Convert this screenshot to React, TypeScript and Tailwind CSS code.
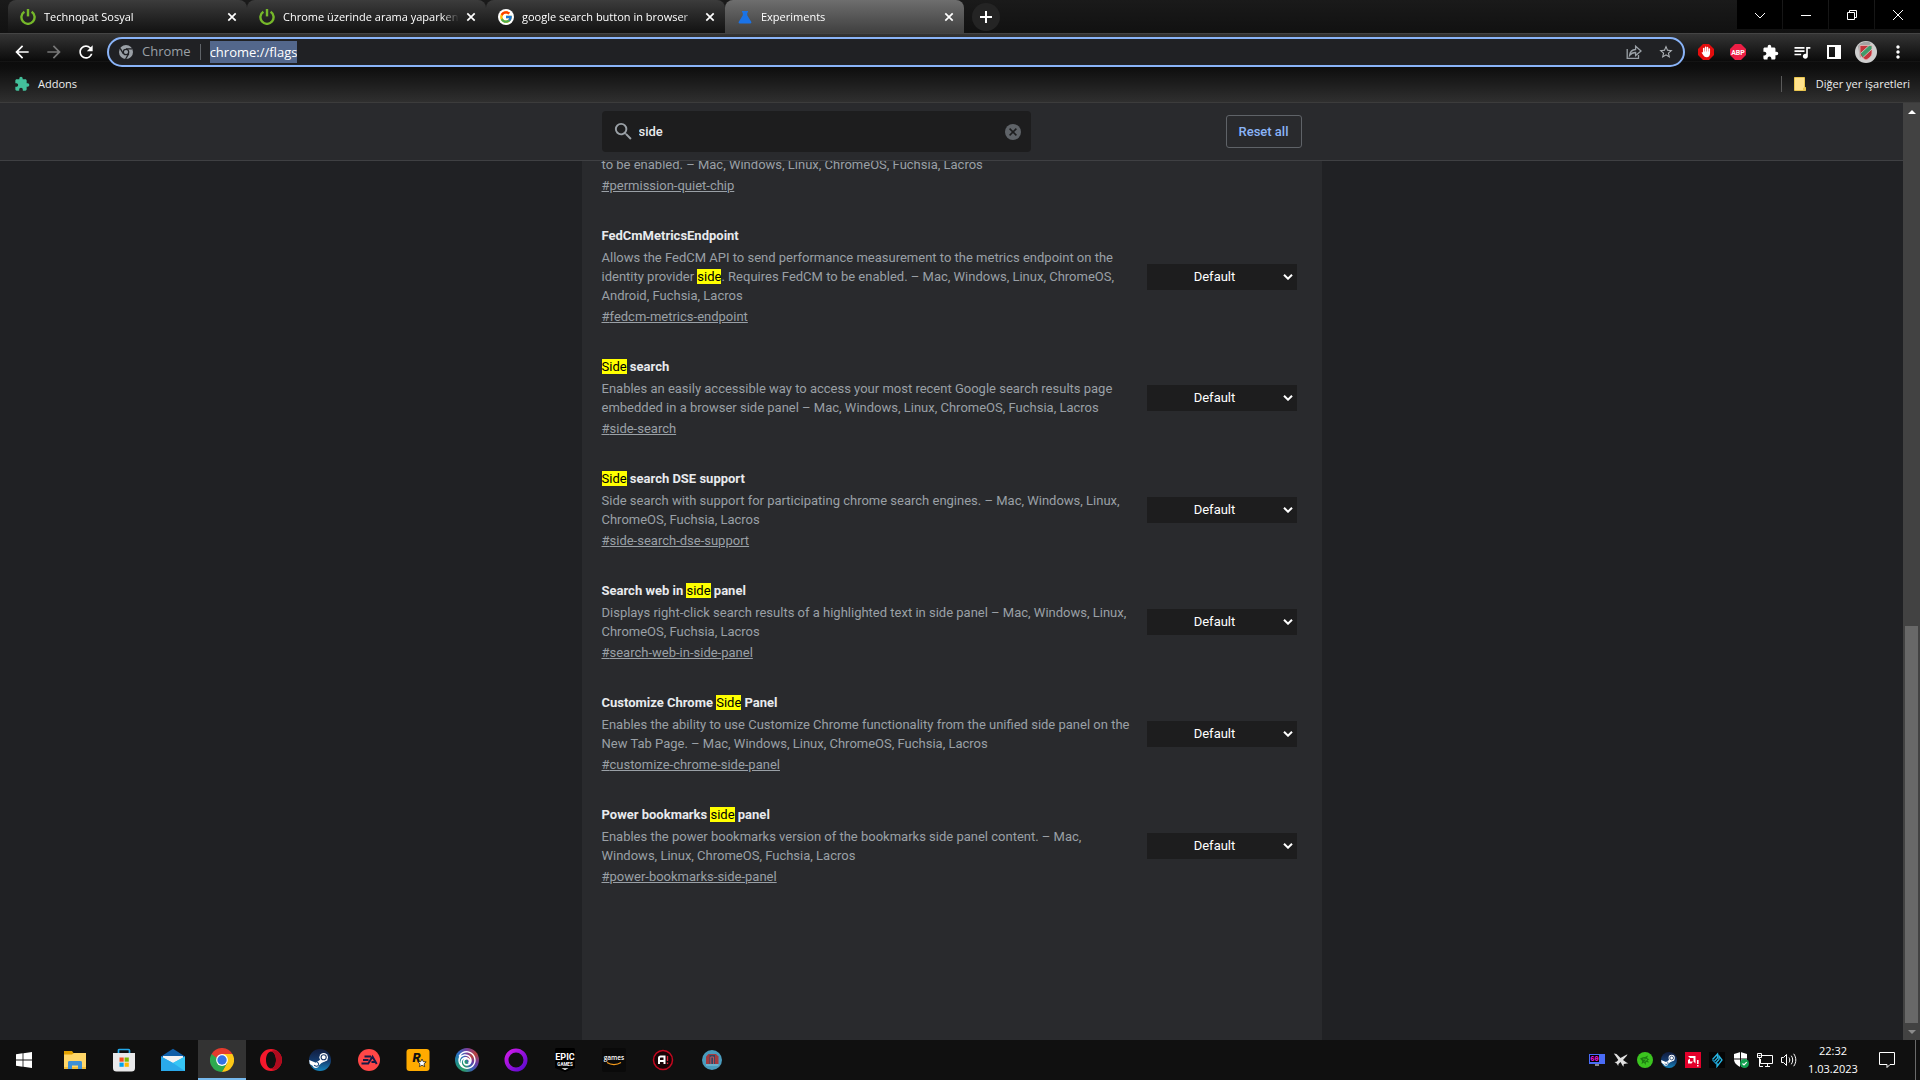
import type { ReactNode } from 'react'
import { MdArrowBack, MdArrowForward, MdRefresh, MdExtension, MdQueueMusic, MdMoreVert, MdSearch, MdStarBorder } from 'react-icons/md'
import { FcGoogle } from 'react-icons/fc'
import { SiUbisoft } from 'react-icons/si'

const UI_FONT = "font-['Open_Sans','Noto_Sans',sans-serif]"

/* ---------- browser icons ---------- */

const PowerIcon = () => (
  <svg viewBox="0 0 16 16" className="size-4" fill="none" stroke="#76b82a" strokeWidth="2.4">
    <path d="M4.4 2.7A6.6 6.6 0 1 0 11.6 2.7"/>
    <path d="M8 0v7.4"/>
  </svg>
)

const GoogleIcon = () => (
  <span className="flex size-4 items-center justify-center rounded-full bg-white"><FcGoogle size={14}/></span>
)

const FlaskIcon = () => (
  <svg viewBox="0 0 16 16" className="size-4" fill="#1a73e8">
    <path d="M5 2h6v1.5h-.8v2.7l4 6.6c.5.8 0 1.700-.9 1.700H2.700c-.9 0-1.400-.9-.9-1.700l4-6.600V3.500H5z"/>
  </svg>
)

const CloseIcon = () => (
  <svg viewBox="0 0 16 16" className="size-4" stroke="#fff" strokeWidth="1.7"><path d="M4.3 4.3l7.4 7.4M11.700 4.300l-7.400 7.400"/></svg>
)

const ChromeMono = () => (
  <svg viewBox="0 0 16 16" className="size-4" fill="none">
    <circle cx="8" cy="8" r="7" fill="#9aa0a6"/>
    <circle cx="8" cy="8" r="2.7" fill="#9aa0a6" stroke="#202124" strokeWidth="1.3"/>
    <path d="M8 4.800h6.200M5.300 9.600L2.200 4.300M10.800 9.600L7.600 15" stroke="#202124" strokeWidth="1.3"/>
  </svg>
)

const ShareIcon = () => (
  <svg viewBox="0 0 16 16" className="size-4" fill="none" stroke="#9aa0a6" strokeWidth="1.3">
    <path d="M1.200 5v9.400h11.300V11"/>
    <path d="M3.600 11.400C4 7.600 6.200 5.700 9.600 5.500V2.300L15 7l-5.400 4.600V8.500c-2.700 0-4.600.9-6 2.900z"/>
  </svg>
)

const OCTAGON = 'M5 0h6l5 5v6l-5 5H5l-5-5V5z'

const HandIcon = () => (
  <svg viewBox="0 0 16 16" className="size-4">
    <path d={OCTAGON} fill="#e40d0d"/>
    <path d="M5.700 9V4.500M7.600 8V3.200M9.500 8V3.600M11.300 9V5" stroke="#fff" strokeWidth="1.5" strokeLinecap="round"/>
    <path d="M5 7.500h7v2c0 2.200-1.200 3.700-3.300 3.700-1.700 0-2.600-.7-3.400-2L3.600 8.700c.4-.7 1.100-.5 1.500 0z" fill="#fff"/>
  </svg>
)

const AbpIcon = () => (
  <svg viewBox="0 0 16 16" className="size-4">
    <path d={OCTAGON} fill="#ed1e45"/>
    <text x="8" y="10.600" textAnchor="middle" fontSize="7" fontWeight="700" fontFamily="Roboto, sans-serif" fill="#fff">ABP</text>
  </svg>
)

const SidePanelIcon = () => (
  <svg viewBox="0 0 16 16" className="size-4"><path fillRule="evenodd" fill="#fff" d="M1 1h14v14H1zM3 3v10h6V3z"/></svg>
)

const ProfileIcon = () => (
  <svg viewBox="0 0 22 22" className="size-[22px]">
    <circle cx="11" cy="11" r="11" fill="#cfcfcf"/>
    <path d="M3 5a10 10 0 0 1 13-3L5 17z" fill="#a3a3a3"/>
    <path d="M5 4.500h12V12c0 3-3 5.500-6 7-3-1.500-6-4-6-7z" fill="#c3343c"/>
    <path d="M5.500 12L14 4.500h3V8L8 16.500z" fill="#3f9b6b"/>
    <path d="M5.500 12.500l8.500-8M8 16.500l9-8.500" stroke="#f2d9d9" strokeWidth=".7"/>
    <path d="M5 4.500h12V12c0 3-3 5.500-6 7-3-1.500-6-4-6-7z" fill="none" stroke="#e6bcbc" strokeWidth=".8"/>
  </svg>
)

const FolderIcon = () => (
  <svg viewBox="0 0 16 16" className="size-4">
    <path d="M2.500 1.500h10V11l1 .5v3h-11z" fill="#ffe28c" stroke="#eac64f"/>
    <path d="M11 14.500V12l1.500-1 1 .7v2.800z" fill="#eac64f"/>
  </svg>
)

/* ---------- taskbar icons ---------- */

const WindowsIcon = () => (
  <svg viewBox="0 0 16 16" className="size-4" fill="#fff">
    <path d="M0 2.200l6.600-.9v6.300H0zM7.400 1.200L16 0v7.600H7.400zM0 8.400h6.600v6.300L0 13.800zM7.400 8.400H16V16l-8.600-1.200z"/>
  </svg>
)

const ExplorerIcon = () => (
  <svg viewBox="0 0 24 24" className="size-6">
    <path d="M1 3h8l1.500 2H22v3H1z" fill="#e2a100"/>
    <path d="M1 6.500h8L11 5h12v16H1z" fill="#ffd667"/>
    <path d="M5 21v-6.500c0-1 .6-1.500 1.500-1.500h11c.9 0 1.500.5 1.500 1.500V21h-4v-3.500H9V21z" fill="#3d8fd6"/>
    <path d="M1 19h4v2H1zM19 19h4v2h-4zM9 19h6v2H9z" fill="#f3bd35"/>
  </svg>
)

const StoreIcon = () => (
  <svg viewBox="0 0 24 24" className="size-6">
    <path d="M6.500 6V2.500c0-.7.4-1 1-1h9c.6 0 1 .3 1 1V6" fill="none" stroke="#23a9ea" strokeWidth="1.700"/>
    <path d="M1 5h22v15a3.500 3.500 0 0 1-3.500 3.500h-15A3.500 3.500 0 0 1 1 20z" fill="#e9e9ea"/>
    <path d="M7.500 9.500h4.200v4.200H7.500z" fill="#f25022"/>
    <path d="M12.600 9.500h4.200v4.200h-4.200z" fill="#7fba00"/>
    <path d="M7.500 14.600h4.200v4.200H7.500z" fill="#00a4ef"/>
    <path d="M12.600 14.600h4.200v4.200h-4.200z" fill="#ffb900"/>
  </svg>
)

const MailIcon = () => (
  <svg viewBox="0 0 24 24" className="size-6">
    <path d="M0 8.500L12 .8l12 7.700V12H0z" fill="#0f5ea8"/>
    <path d="M2 8h20v6l-10 3L2 14z" fill="#f2f2f2"/>
    <path d="M0 8.500L12 15l12-6.500V23H0z" fill="#2cb4ee"/>
    <path d="M12 15l12 8H0V8.500z" fill="#2aa9ea"/>
    <path d="M12 15l12-6.500V23z" fill="#36c5f5"/>
  </svg>
)

const ChromeIcon = () => (
  <svg viewBox="0 0 24 24" className="size-6">
    <path d="M12 12L1.600 6A12 12 0 0 1 22.400 6z" fill="#e33b2e"/>
    <path d="M1.600 6A12 12 0 0 0 12 24l5.200-9L12 12z" fill="#2da94f"/>
    <path d="M12 24A12 12 0 0 0 22.400 6H12l5.200 9z" fill="#fdc817"/>
    <path d="M1.600 6L6.800 15 12 12V6z" fill="#2da94f"/>
    <path d="M1.600 6L6.800 10 12 6.600V6z" fill="#e33b2e"/>
    <circle cx="12" cy="12" r="5.900" fill="#fff"/>
    <circle cx="12" cy="12" r="4.700" fill="#3472e4"/>
  </svg>
)

const OperaIcon = () => (
  <svg viewBox="0 0 24 24" className="size-6">
    <path fillRule="evenodd" fill="#f5182c" d="M12 1a11 11 0 1 0 0 22 11 11 0 0 0 0-22zm0 2.500c2.800 0 5 3.800 5 8.500s-2.200 8.500-5 8.500S7 16.700 7 12s2.200-8.500 5-8.500z"/>
    <path fill="#b00b1e" d="M12 3.500C14 1.500 17 2 19 3.600a11 11 0 0 1 0 16.800c-2 1.600-5 2.100-7 .1 2.800 0 5-3.800 5-8.500s-2.200-8.500-5-8.500z"/>
  </svg>
)

const SteamIcon = ({ className }: { className: string }) => (
  <svg viewBox="0 0 24 24" className={className}>
    <defs><linearGradient id="steam" x1="0" y1="0" x2="0" y2="1"><stop stopColor="#111d3f"/><stop offset=".5" stopColor="#14386a"/><stop offset="1" stopColor="#1585bd"/></linearGradient></defs>
    <circle cx="12" cy="12" r="12" fill="url(#steam)"/>
    <path d="M.2 12l7.300 3 5-3.500 1.800-4.500 6.200 5-6.800 3.200-2.700 2.600a3.700 3.700 0 0 1-7.100.6L.8 16.300z" fill="#fff"/>
    <circle cx="16" cy="9" r="4.700" fill="#fff"/>
    <circle cx="16" cy="9" r="2.800" fill="none" stroke="#1a3766" strokeWidth="1.200"/>
    <path d="M5.500 17.800l1.800.7a2.200 2.200 0 1 0 1.500-4.100" fill="none" stroke="#1a4a80" strokeWidth="1.100"/>
  </svg>
)

const EaIcon = () => (
  <svg viewBox="0 0 24 24" className="size-6" fill="none" stroke="#151a46" strokeWidth="1.900">
    <circle cx="12" cy="12" r="11" fill="#ff4747" stroke="none"/>
    <path d="M7.500 8.500h6.500M6 12h5.500M4.500 15.500h6.700L15.500 8.700l4.200 7.300M14.500 14h3.500"/>
  </svg>
)

const RockstarIcon = () => (
  <svg viewBox="0 0 24 24" className="size-6">
    <rect x=".5" y="1" width="23" height="22" rx="3" fill="#ffab00"/>
    <text x="6.500" y="14" fontSize="13" fontWeight="900" fontStyle="italic" fontFamily="Roboto, sans-serif" fill="#111">R</text>
    <path d="M16 11l1.200 2.600 3 .3-2.200 1.900.7 2.900-2.700-1.500-2.600 1.500.6-2.900-2.100-1.900 2.900-.3z" fill="#fff" stroke="#111" strokeWidth=".7"/>
  </svg>
)

const UbisoftIcon = () => (
  <span className="flex size-6 items-center justify-center rounded-full bg-[conic-gradient(#7a3f9d,#b8433f_15%,#6b3aa0_30%,#3b62b5_42%,#2c9a6a_55%,#1f8f8a_70%,#2a6fc4_85%,#7a3f9d)] text-white">
    <SiUbisoft size={18}/>
  </span>
)

const RingIcon = () => (
  <svg viewBox="0 0 24 24" className="size-6" fill="none">
    <defs><linearGradient id="ring" x1="0" y1="0" x2="1" y2="1"><stop stopColor="#d01be8"/><stop offset="1" stopColor="#5b09cf"/></linearGradient></defs>
    <circle cx="12" cy="12" r="9.500" stroke="url(#ring)" strokeWidth="4"/>
  </svg>
)

const EpicIcon = () => (
  <svg viewBox="0 0 24 24" className="size-6">
    <path d="M2 1.500C2 .6 2.600 0 3.500 0h17c.9 0 1.500.6 1.500 1.500V20l-10 4-10-4z" fill="#000"/>
    <text x="12" y="11.500" textAnchor="middle" fontSize="9" fontWeight="700" fontFamily="Roboto, sans-serif" fill="#fff">EPIC</text>
    <text x="12" y="17.500" textAnchor="middle" fontSize="4.500" fontWeight="700" fontFamily="Roboto, sans-serif" fill="#fff">GAMES</text>
    <path d="M8.500 20.300h7L12 22z" fill="#fff"/>
  </svg>
)

const AmazonGamesIcon = () => (
  <svg viewBox="0 0 24 24" className="size-6">
    <rect width="24" height="24" rx="2" fill="#0a0a0a"/>
    <text x="12" y="12" textAnchor="middle" fontSize="6.500" fontWeight="600" fontFamily="Open Sans, sans-serif" fill="#fff">games</text>
    <path d="M5 14.500c4 2.700 10 2.700 14 0" fill="none" stroke="#f59b1c" strokeWidth="1.200"/>
  </svg>
)

const RedCircleIcon = () => (
  <svg viewBox="0 0 24 24" className="size-6">
    <circle cx="12" cy="12" r="9.500" fill="#170406" stroke="#c3081f" strokeWidth="1.500"/>
    <path d="M8 16V10q0-1.500 1.700-1.500h3.800V16M8 13h5.500" fill="none" stroke="#fff" strokeWidth="2"/>
    <path d="M16.500 8v5M16.500 14.500V16" stroke="#e0213a" strokeWidth="1.300"/>
  </svg>
)

const BlueBadgeIcon = () => (
  <svg viewBox="0 0 24 24" className="size-6">
    <circle cx="12" cy="12" r="10" fill="#4a9bbd"/>
    <path d="M6 8.500L8.500 6h7.500l2.500 2.500V16H6z" fill="#a33a3f"/>
    <path d="M9.500 7h5.500v9H9.500z" fill="#2c4763"/>
    <path d="M10.800 16V9h2.800v7" fill="none" stroke="#c5545a"/>
    <path d="M6 17h12.500" stroke="#87c4dc"/>
  </svg>
)

/* ---------- tray icons ---------- */

const TRAY: { label: string; icon: ReactNode }[] = [
  { label: 'Frame rate', icon: (
    <svg viewBox="0 0 16 16" className="size-4">
      <path d="M0 2h16v10H0z" fill="#4a6cf7"/><path d="M1 3h9v7H1z" fill="#000"/>
      <path d="M6 12h4v2H6z" fill="#888"/>
      <text x="1.200" y="9.200" fontSize="7" fontWeight="700" fontFamily="Liberation Mono, monospace" fill="#ff1cf0">60</text>
    </svg>
  ) },
  { label: 'Plane', icon: (
    <svg viewBox="0 0 16 16" className="size-4" fill="#e0e0e0">
      <path d="M.8 1.500L3.500 2l4 4L12 3.500l2.500-1.200-.7 1.500L10 8l3.500 2.500 1.800.7-4.500.8-.3 2.800-1-1.300L7.500 10 5.500 12l-.3 2-1.500-2.500L1.500 10l2-.2L5.300 8 3 4.500z"/>
    </svg>
  ) },
  { label: 'Razer', icon: (
    <svg viewBox="0 0 16 16" className="size-4">
      <circle cx="8" cy="8" r="8" fill="#3bc41f"/>
      <path d="M3 6.500c2-.8 3-2 5-1.500l3-1.500-1 2.500 2.500 1.500-2 .5 1.500 2.500-3-.5-.5 3-1.500-2.500L4.500 12l.7-3z" fill="#1d7d12"/>
      <path d="M6 7l4 .5-2.500 2" fill="none" stroke="#3bc41f" strokeWidth=".8"/>
    </svg>
  ) },
  { label: 'Steam', icon: <SteamIcon className="size-4"/> },
  { label: 'AMD', icon: (
    <svg viewBox="0 0 16 16" className="size-4">
      <path d="M0 0h16v16H0z" fill="#e4002b"/>
      <path d="M3 4h7.500v7.500L8.500 9.500V6H5zM3 8l2-1.500v3h3L6.500 11.500H3z" fill="#fff"/>
      <path d="M12.800 8v4M12.800 13v1.500" stroke="#fff" strokeWidth="1.500"/>
    </svg>
  ) },
  { label: 'Audio', icon: (
    <svg viewBox="0 0 16 16" className="size-4" fill="none" strokeWidth="1.300">
      <path d="M0 0h16v16H0z" fill="#050505"/>
      <path d="M3.500 7.500l5-5.500v4l-3 3M6.500 11.500l3.500-4V4l3 4-5 6.500v-3.500" stroke="#27b5e3"/>
      <path d="M3.500 8l4 4" stroke="#1687b8"/>
    </svg>
  ) },
  { label: 'Windows Security', icon: (
    <svg viewBox="0 0 16 16" className="size-4">
      <path d="M7.500 0L14 2v5c0 4-3 6.500-6.500 8C4 13.500 1 11 1 7V2z" fill="#fff"/>
      <path d="M7.500 0v15M1 7h13" stroke="#111"/>
      <circle cx="11.500" cy="11.500" r="4.500" fill="#12a150"/>
      <path d="M9.500 11.500l1.500 1.500 2.700-2.900" fill="none" stroke="#fff" strokeWidth="1.200"/>
    </svg>
  ) },
  { label: 'Network', icon: (
    <svg viewBox="0 0 16 16" className="size-4" fill="none" stroke="#fff">
      <path d="M5 3.500h10.500v8H3.500V7M8 14.500h5M10.500 12v2.500M.5 1.500h4v4h-4zM1.500 3.500h2M2.500 5.500v9H6"/>
    </svg>
  ) },
  { label: 'Volume', icon: (
    <svg viewBox="0 0 16 16" className="size-4" fill="none" stroke="#fff">
      <path d="M.5 5.500h2l3-3v11l-3-3h-2zM8 5.500c1 1.500 1 3.500 0 5M10.300 3.700c1.900 2.600 1.900 6 0 8.600M12.700 1.800c2.800 3.700 2.800 8.700 0 12.400"/>
    </svg>
  ) },
]

const APPS: { label: string; Icon: () => ReactNode; active?: boolean }[] = [
  { label: 'File Explorer', Icon: ExplorerIcon },
  { label: 'Microsoft Store', Icon: StoreIcon },
  { label: 'Mail', Icon: MailIcon },
  { label: 'Google Chrome', Icon: ChromeIcon, active: true },
  { label: 'Opera', Icon: OperaIcon },
  { label: 'Steam', Icon: () => <SteamIcon className="size-[22px]"/> },
  { label: 'EA', Icon: EaIcon },
  { label: 'Rockstar Games', Icon: RockstarIcon },
  { label: 'Ubisoft Connect', Icon: UbisoftIcon },
  { label: 'Ring', Icon: RingIcon },
  { label: 'Epic Games', Icon: EpicIcon },
  { label: 'Amazon Games', Icon: AmazonGamesIcon },
  { label: 'A!', Icon: RedCircleIcon },
  { label: 'Game', Icon: BlueBadgeIcon },
]

const TABS = [
  { title: 'Technopat Sosyal', Icon: PowerIcon, divider: true },
  { title: 'Chrome üzerinde arama yaparken', Icon: PowerIcon, divider: true },
  { title: 'google search button in browser', Icon: GoogleIcon },
  { title: 'Experiments', Icon: FlaskIcon, active: true },
]

const Mark = ({ children }: { children: ReactNode }) => (
  <mark className="bg-[#ff0] font-normal text-black">{children}</mark>
)

const FLAGS: { id: string; title: ReactNode; text: ReactNode }[] = [
  {
    id: 'fedcm-metrics-endpoint',
    title: 'FedCmMetricsEndpoint',
    text: <>Allows the FedCM API to send performance measurement to the metrics endpoint on the identity provider <Mark>side</Mark>. Requires FedCM to be enabled. – Mac, Windows, Linux, ChromeOS, Android, Fuchsia, Lacros</>,
  },
  {
    id: 'side-search',
    title: <><Mark>Side</Mark> search</>,
    text: 'Enables an easily accessible way to access your most recent Google search results page embedded in a browser side panel – Mac, Windows, Linux, ChromeOS, Fuchsia, Lacros',
  },
  {
    id: 'side-search-dse-support',
    title: <><Mark>Side</Mark> search DSE support</>,
    text: 'Side search with support for participating chrome search engines. – Mac, Windows, Linux, ChromeOS, Fuchsia, Lacros',
  },
  {
    id: 'search-web-in-side-panel',
    title: <>Search web in <Mark>side</Mark> panel</>,
    text: 'Displays right-click search results of a highlighted text in side panel – Mac, Windows, Linux, ChromeOS, Fuchsia, Lacros',
  },
  {
    id: 'customize-chrome-side-panel',
    title: <>Customize Chrome <Mark>Side</Mark> Panel</>,
    text: 'Enables the ability to use Customize Chrome functionality from the unified side panel on the New Tab Page. – Mac, Windows, Linux, ChromeOS, Fuchsia, Lacros',
  },
  {
    id: 'power-bookmarks-side-panel',
    title: <>Power bookmarks <Mark>side</Mark> panel</>,
    text: 'Enables the power bookmarks version of the bookmarks side panel content. – Mac, Windows, Linux, ChromeOS, Fuchsia, Lacros',
  },
]

function TabStrip() {
  return (
    <div className="flex h-[33px] bg-linear-to-b from-[#1a1a1a] to-[#111] pl-2">
      {TABS.map(({ title, Icon, divider, active }) => (
        <div key={title} className={`relative flex w-[239px] items-center rounded-t-lg pt-px pr-[7px] pl-3 ${active ? 'bg-linear-to-b from-[#6e6e6e] to-[#404040]' : 'bg-linear-to-b from-[#3c3c3c] to-[#121212]'}`}>
          <Icon/>
          <span className="ml-2 flex-1 overflow-hidden text-[11px] whitespace-nowrap text-white [mask-image:linear-gradient(to_right,#000_90%,transparent)]">{title}</span>
          <button aria-label="Close tab" className="ml-1"><CloseIcon/></button>
          {divider && <span className="absolute top-2 -right-px h-5 w-px bg-[#6b6b6b]"/>}
        </div>
      ))}
      <button aria-label="New tab" className="mt-[3px] ml-2 flex size-7 items-center justify-center rounded-full bg-[#242424]">
        <svg viewBox="0 0 12 12" className="size-3" stroke="#fff" strokeWidth="2"><path d="M6 0v12M0 6h12"/></svg>
      </button>
      <div className="ml-auto flex h-[29px] gap-px">
        {[
          { label: 'Search tabs', d: 'M1 4l5 5 5-5' },
          { label: 'Minimize', d: 'M1 6.5h10' },
          { label: 'Restore', d: 'M1.5 3.5h7v7h-7zM3.5 3.5v-2h7v7h-2' },
          { label: 'Close', d: 'M1 1l10 10M11 1L1 11' },
        ].map(({ label, d }) => (
          <button key={label} aria-label={label} className="flex w-[45px] items-center justify-center bg-black">
            <svg viewBox="0 0 12 12" className="size-3" fill="none" stroke="#fff"><path d={d}/></svg>
          </button>
        ))}
      </div>
    </div>
  )
}

function Toolbar() {
  return (
    <div className="border-t border-b border-t-[#444] border-b-[#3c3c3c] bg-[linear-gradient(#343434_0,#0b0b0b_27px,#1c1c1c_27px,#0c0c0c_28px,#0e0e0e_34px,#2f2f2f_100%)]">
      <div className="flex h-9 items-center px-1.5 text-white">
        <button aria-label="Back" className="flex w-8 justify-center"><MdArrowBack size={20}/></button>
        <button aria-label="Forward" className="flex w-8 justify-center text-[#777]"><MdArrowForward size={20}/></button>
        <button aria-label="Reload" className="flex w-8 justify-center"><MdRefresh size={20}/></button>
        <div className="mx-[5px] flex h-[30px] flex-1 items-center rounded-full border-2 border-[#8ab4f8] bg-[#202124] px-[9px]">
          <ChromeMono/>
          <label htmlFor="address" className="ml-2 text-[13px] text-[#9aa0a6]">Chrome</label>
          <span className="mx-[9px] h-4 w-px bg-[#5f6368]"/>
          <input id="address" defaultValue="chrome://flags" className="field-sizing-content h-[22px] bg-[#53678c] text-[13px] text-white outline-none"/>
          <button aria-label="Share" className="ml-auto"><ShareIcon/></button>
          <button aria-label="Bookmark this tab" className="ml-4 text-[#b0b4b8]"><MdStarBorder size={16}/></button>
        </div>
        <button aria-label="AdBlock" className="flex w-8 justify-center"><HandIcon/></button>
        <button aria-label="Adblock Plus" className="flex w-8 justify-center"><AbpIcon/></button>
        <button aria-label="Extensions" className="flex w-8 justify-center"><MdExtension size={17}/></button>
        <button aria-label="Media" className="flex w-8 justify-center"><MdQueueMusic size={20}/></button>
        <button aria-label="Side panel" className="flex w-8 justify-center"><SidePanelIcon/></button>
        <button aria-label="Profile" className="flex w-8 justify-center"><ProfileIcon/></button>
        <button aria-label="Menu" className="flex w-8 justify-center"><MdMoreVert size={20}/></button>
      </div>
      <div className="mb-1 flex h-7 items-center pr-2.5 pl-3.5 text-[11px] text-[#eee]">
        <button className="flex items-center gap-2"><MdExtension size={16} className="text-[#43c09b]"/>Addons</button>
        <span className="mr-2.5 ml-auto h-4 w-px bg-[#5a5a5a]"/>
        <button className="flex items-center gap-2"><FolderIcon/>Diğer yer işaretleri</button>
      </div>
    </div>
  )
}

function SearchHeader() {
  return (
    <header className="border-b border-[#3f4043] bg-[#292a2d]">
      <div className="mx-auto flex h-[57px] w-full max-w-[740px] items-center px-5">
        <div className="flex h-[41px] w-[429px] items-center rounded bg-[#1d1d1e] px-2.5">
          <label htmlFor="search" aria-label="Search flags" className="text-[#9aa0a6]"><MdSearch size={23}/></label>
          <input id="search" defaultValue="side" className="ml-1 min-w-0 flex-1 bg-transparent text-[13px] font-medium text-[#e8eaed] outline-none"/>
          <button aria-label="Clear search">
            <svg viewBox="0 0 16 16" className="size-4"><circle cx="8" cy="8" r="8" fill="#5f6368"/><path d="M4.600 4.600l6.800 6.800M11.400 4.600l-6.800 6.800" stroke="#1d1d1e" strokeWidth="1.500"/></svg>
          </button>
        </div>
        <button className="ml-auto h-[33px] w-[76px] rounded-[3px] border border-[#5f6368] text-[13px] font-medium text-[#8ab4f8]">Reset all</button>
      </div>
    </header>
  )
}

function FlagRow({ id, title, text }: { id: string; title: ReactNode; text: ReactNode }) {
  return (
    <li className="flex items-center gap-3 pr-[5px]">
      <div className="flex-1">
        <h3 id={`${id}-name`} className="mb-0.5 leading-5 font-bold text-[#e8eaed]">{title}</h3>
        <p className="leading-[19px]">{text}</p>
        <a href={`#${id}`} className="mt-0.5 block leading-5 underline">#{id}</a>
      </div>
      <div className="relative text-white">
        <select aria-labelledby={`${id}-name`} className="h-[26px] w-[150px] appearance-none bg-[#1d1d1e] pr-3.5 text-center text-[13px] outline-none">
          <option>Default</option>
          <option>Enabled</option>
          <option>Disabled</option>
        </select>
        <svg viewBox="0 0 10 6" className="pointer-events-none absolute top-2.5 right-1 h-1.5 w-2.5" fill="none" stroke="#fff" strokeWidth="2"><path d="M1 .7l4 4 4-4"/></svg>
      </div>
    </li>
  )
}

function Scrollbar() {
  return (
    <div className="flex w-[17px] flex-col items-center bg-[#424242]">
      <span className="flex h-[17px] items-center"><svg viewBox="0 0 8 4" className="h-1 w-2" fill="#fff"><path d="M0 4l4-4 4 4z"/></svg></span>
      <div className="flex min-h-0 w-[13px] flex-1 flex-col justify-end"><div className="h-[44%] bg-[#686868]"/></div>
      <span className="flex h-[17px] items-center"><svg viewBox="0 0 8 4" className="h-1 w-2" fill="#8b8b8b"><path d="M0 0l4 4 4-4z"/></svg></span>
    </div>
  )
}

function Taskbar() {
  return (
    <footer className="flex h-10 bg-[#101010]">
      <button aria-label="Start" className="mr-[3px] flex w-12 items-center justify-center"><WindowsIcon/></button>
      <div className="flex gap-px">
        {APPS.map(({ label, Icon, active }) => (
          <button key={label} aria-label={label} className={`flex w-12 items-center justify-center ${active ? 'border-b-2 border-[#76b9ed] bg-[#333] pt-0.5' : ''}`}><Icon/></button>
        ))}
      </div>
      <div className="ml-auto flex">
        {TRAY.map(({ label, icon }) => (
          <button key={label} aria-label={label} className="flex w-6 items-center justify-center">{icon}</button>
        ))}
        <button className="flex w-16 flex-col items-center justify-center text-[11px] leading-[18px] text-white">
          <span>22:32</span>
          <span>1.03.2023</span>
        </button>
        <button aria-label="Notifications" className="flex w-11 items-center justify-center">
          <svg viewBox="0 0 16 16" className="size-4" fill="none" stroke="#fff"><path d="M.5.5h15v12H11L8 15.500V12.500H.5z"/></svg>
        </button>
        <button aria-label="Show desktop" className="ml-1.5 w-[5px] border-l border-[#6a6a6a]"/>
      </div>
    </footer>
  )
}

export default function App() {
  return (
    <div className={`flex h-screen flex-col overflow-hidden bg-[#202124] ${UI_FONT}`}>
      <TabStrip/>
      <Toolbar/>
      <div className="flex min-h-0 flex-1">
        <div className="flex min-w-0 flex-1 flex-col font-[Roboto,sans-serif]">
          <SearchHeader/>
          <main className="min-h-0 flex-1 overflow-hidden">
            <div className="mx-auto h-full w-full max-w-[740px] overflow-hidden bg-[#292a2d] px-5 text-[13px] text-[#9aa0a6]">
              {/* list is scrolled partway through its first entry */}
              <ul className="-mt-1.5 flex flex-col gap-[30px]">
                <li>
                  <p className="leading-[19px]">to be enabled. – Mac, Windows, Linux, ChromeOS, Fuchsia, Lacros</p>
                  <a href="#permission-quiet-chip" className="mt-0.5 block leading-5 underline">#permission-quiet-chip</a>
                </li>
                {FLAGS.map(flag => <FlagRow key={flag.id} {...flag}/>)}
              </ul>
            </div>
          </main>
        </div>
        <Scrollbar/>
      </div>
      <Taskbar/>
    </div>
  )
}
